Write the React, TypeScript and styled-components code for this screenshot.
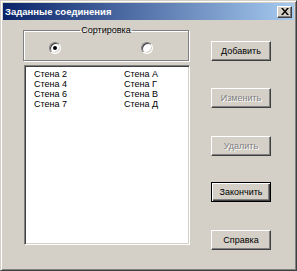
import { Fragment } from 'react';
import styled, { createGlobalStyle, css } from 'styled-components';

const GlobalStyle = createGlobalStyle`
  html, body {
    margin: 0;
    padding: 0;
    background: #d4d0c8;
    overflow: hidden;
  }
`;

const Window = styled.div`
  box-sizing: border-box;
  width: 297px;
  height: 271px;
  background: #d4d0c8;
  border-style: solid;
  border-width: 1px;
  border-color: #d4d0c8 #404040 #404040 #d4d0c8;
  box-shadow: inset 1px 1px 0 #fff, inset -1px -1px 0 #808080;
  padding: 2px;
  display: flex;
  flex-direction: column;
  font-family: 'Liberation Sans', Arial, sans-serif;
`;

const TitleBar = styled.div`
  height: 17px;
  display: flex;
  align-items: center;
  justify-content: space-between;
  padding: 0 2px 0 2px;
  background: linear-gradient(to right, #0a246a, #a6caf0);
`;

const Title = styled.span`
  color: #fff;
  font-family: 'Liberation Sans Narrow', 'Liberation Sans', Arial, sans-serif;
  font-weight: bold;
  font-size: 9.5px;
`;

const CloseButton = styled.div`
  box-sizing: border-box;
  width: 15px;
  height: 12px;
  background: #d4d0c8;
  border-style: solid;
  border-width: 1px;
  border-color: #fff #404040 #404040 #fff;
  box-shadow: inset -1px -1px 0 #808080;
  display: flex;
  align-items: center;
  justify-content: center;
`;

const Body = styled.div`
  flex: 1;
  display: flex;
  padding: 5px 0 0 20px;
`;

const LeftColumn = styled.div`
  width: 167px;
  display: flex;
  flex-direction: column;
`;

const Group = styled.fieldset`
  box-sizing: border-box;
  margin: 0;
  width: 166px;
  height: 36px;
  padding: 0;
  border: 1px solid #808080;
  box-shadow: 1px 1px 0 #fff, inset 1px 1px 0 #fff;
  display: flex;
  justify-content: space-between;
  align-items: center;
`;

const Legend = styled.legend`
  font-size: 9px;
  color: #000;
  padding: 0 1px;
  margin: 0 auto;
  line-height: 11px;
`;

const RadioRow = styled.div`
  width: 100%;
  display: flex;
  padding: 0 0 0 25px;
  gap: 80px;
  margin-top: 6px;
`;

const Radio = styled.span<{ $checked?: boolean }>`
  box-sizing: border-box;
  width: 12px;
  height: 12px;
  border-radius: 50%;
  background: #fff;
  border: 1px solid;
  border-color: #808080 #fff #fff #808080;
  box-shadow: inset 1px 1px 0 #404040, inset -1px -1px 0 #d4d0c8;
  display: flex;
  align-items: center;
  justify-content: center;
  &::after {
    content: '';
    width: 4px;
    height: 4px;
    border-radius: 50%;
    background: ${(p) => (p.$checked ? '#000' : 'transparent')};
  }
`;

const List = styled.div`
  box-sizing: border-box;
  margin-top: 4px;
  margin-left: 1px;
  width: 166px;
  height: 180px;
  background: #fff;
  border-style: solid;
  border-width: 1px;
  border-color: #808080 #fff #fff #808080;
  box-shadow: inset 1px 1px 0 #404040, inset -1px -1px 0 #d4d0c8;
  padding: 3px 0 0 9px;
  display: grid;
  grid-template-columns: 90px auto;
  grid-auto-rows: 10px;
  align-content: start;
  font-size: 9px;
  line-height: 10px;
  color: #000;
`;

const ButtonColumn = styled.div`
  display: flex;
  flex-direction: column;
  margin-left: 21px;
  padding-top: 16px;
`;

const Button = styled.div<{ $disabled?: boolean; $default?: boolean; $gap: number }>`
  box-sizing: border-box;
  width: 60px;
  height: 20px;
  margin-top: ${(p) => p.$gap}px;
  display: flex;
  align-items: center;
  justify-content: center;
  font-size: 9px;
  background: #d4d0c8;
  border-style: solid;
  border-width: 1px;
  border-color: #fff #404040 #404040 #fff;
  box-shadow: inset -1px -1px 0 #808080;
  color: #000;
  ${(p) =>
    p.$disabled &&
    css`
      color: #808080;
      text-shadow: 1px 1px 0 #fff;
    `}
  ${(p) =>
    p.$default &&
    css`
      border: 1px solid #000;
      box-shadow: inset 1px 1px 0 #fff, inset -1px -1px 0 #404040, inset -2px -2px 0 #808080;
    `}
`;

const rows = [
  ['Стена 2', 'Стена А'],
  ['Стена 4', 'Стена Г'],
  ['Стена 6', 'Стена В'],
  ['Стена 7', 'Стена Д'],
];

export default function App() {
  return (
    <>
      <GlobalStyle />
      <Window>
        <TitleBar>
          <Title>Заданные соединения</Title>
          <CloseButton>
            <svg width="8" height="7" viewBox="0 0 8 7">
              <path d="M0 0h2l2 2.5L6 0h2L5 3.5 8 7H6L4 4.5 2 7H0l3-3.5z" fill="#000" />
            </svg>
          </CloseButton>
        </TitleBar>
        <Body>
          <LeftColumn>
            <Group>
              <Legend>Сортировка</Legend>
              <RadioRow>
                <Radio $checked />
                <Radio />
              </RadioRow>
            </Group>
            <List>
              {rows.map(([a, b]) => (
                <Fragment key={a}>
                  <span>{a}</span>
                  <span>{b}</span>
                </Fragment>
              ))}
            </List>
          </LeftColumn>
          <ButtonColumn>
            <Button $gap={0}>Добавить</Button>
            <Button $gap={27} $disabled>Изменить</Button>
            <Button $gap={28} $disabled>Удалить</Button>
            <Button $gap={26} $default>Закончить</Button>
            <Button $gap={28}>Справка</Button>
          </ButtonColumn>
        </Body>
      </Window>
    </>
  );
}
